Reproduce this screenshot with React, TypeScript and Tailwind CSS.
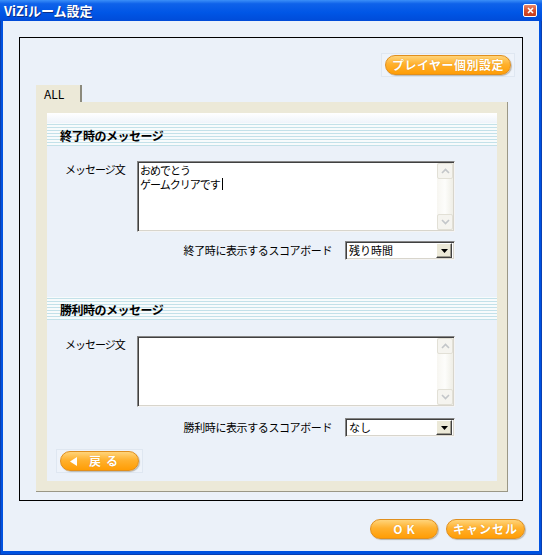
const font = "font-['Noto_Sans_CJK_JP','MS_UI_Gothic',sans-serif]";

const OrangeButton = ({
  children,
  className = "",
}: {
  children: React.ReactNode;
  className?: string;
}) => (
  <div
    className={`flex h-[20px] items-center justify-center rounded-full border border-[#e08f1e] bg-[linear-gradient(to_bottom,#ffd47a_0%,#ffb12e_45%,#ff9d05_100%)] text-[12px] leading-none font-bold text-white shadow-[1px_1px_1px_rgba(120,110,90,0.45)] [text-shadow:0_0_1px_#d98000] ${className}`}
  >
    {children}
  </div>
);

const ButtonBox = ({ children }: { children: React.ReactNode }) => (
  <div className="border border-[#dfe7f1] bg-[#eef3fa] px-[3px] py-[1px]">{children}</div>
);

const Chevron = ({ up }: { up?: boolean }) => (
  <svg width="9" height="6" viewBox="0 0 9 6">
    <polyline
      points={up ? "1,5 4.5,1.5 8,5" : "1,1 4.5,4.5 8,1"}
      fill="none"
      stroke="#c3c6c9"
      strokeWidth="1.6"
    />
  </svg>
);

const ScrollBar = () => (
  <div className="flex w-[16px] flex-col bg-[linear-gradient(to_right,#f7f6f1,#fdfdfb_50%,#efeee6)]">
    <div className="flex h-[16px] items-center justify-center rounded-[2px] border border-[#e2e0d6] bg-[#f5f4ef]">
      <Chevron up />
    </div>
    <div className="flex-1" />
    <div className="flex h-[16px] items-center justify-center rounded-[2px] border border-[#e2e0d6] bg-[#f5f4ef]">
      <Chevron />
    </div>
  </div>
);

const TextBox = ({ lines }: { lines: string[] }) => (
  <div className="flex h-[71px] w-[318px] border border-t-[#868686] border-l-[#868686] border-r-[#f4f4f4] border-b-[#f4f4f4] bg-white shadow-[inset_1px_1px_0_#404040,inset_-1px_-1px_0_#d8d5cc] p-[1px]">
    <div className="flex-1 pl-[1px] pt-[1px] text-[11px] leading-[13px] tracking-[-1px] text-black">
      {lines.map((line, i) => (
        <div key={i}>
          {line}
          {i === lines.length - 1 && <span className="ml-[2px] inline-block h-[12px] w-px translate-y-[1px] bg-black" />}
        </div>
      ))}
    </div>
    <ScrollBar />
  </div>
);

const Select = ({ value }: { value: string }) => (
  <div className="flex h-[19px] w-[110px] items-center border border-t-[#868686] border-l-[#868686] border-r-[#f4f4f4] border-b-[#f4f4f4] bg-white shadow-[inset_1px_1px_0_#404040,inset_-1px_-1px_0_#d8d5cc] p-[2px]">
    <span className="flex-1 pl-[1px] text-[11px] leading-none text-black">{value}</span>
    <div className="flex h-[15px] w-[16px] items-center justify-center border border-t-[#fff] border-l-[#fff] border-r-[#404040] border-b-[#404040] bg-[#ece9d8] shadow-[inset_-1px_-1px_0_#a09d90]">
      <svg width="7" height="4" viewBox="0 0 7 4">
        <polygon points="0,0 7,0 3.5,4" fill="#000" />
      </svg>
    </div>
  </div>
);

const SectionHeader = ({ title }: { title: string }) => (
  <div className="flex h-[23px] items-center bg-[repeating-linear-gradient(to_bottom,#f7fbfc_0px,#f7fbfc_1px,#c3e1e9_1px,#c3e1e9_2px,#f7fbfc_2px,#f7fbfc_3px)] pl-[13px] pt-[2px]">
    <span className="text-[12px] leading-none font-bold tracking-[-0.5px] text-black">{title}</span>
  </div>
);

const MessageSection = ({
  title,
  lines,
  boardLabel,
  boardValue,
  first,
}: {
  title: string;
  lines: string[];
  boardLabel: string;
  boardValue: string;
  first?: boolean;
}) => (
  <div className={first ? "" : "mt-[37px]"}>
    <SectionHeader title={title} />
    <div className={`${first ? "mt-[15px]" : "mt-[16px]"} flex pl-[18px]`}>
      <span className="w-[72px] pt-[3px] text-[11px] leading-none tracking-[-1px] text-black">メッセージ文</span>
      <TextBox lines={lines} />
    </div>
    <div className={`${first ? "mt-[9px]" : "mt-[11px]"} flex items-center justify-end gap-[13px] pr-[42px]`}>
      <span className="text-[11px] leading-none tracking-[-0.4px] text-black">{boardLabel}</span>
      <Select value={boardValue} />
    </div>
  </div>
);

export default function App() {
  return (
    <div
      className={`${font} flex h-[555px] w-[542px] flex-col bg-[#0052e0] px-[3px] pb-[4px] shadow-[inset_1px_0_0_#0a3fb0,inset_-1px_0_0_#0a3fb0,inset_0_-1px_0_#0a3fb0]`}
    >
      {/* title bar */}
      <div className="-mx-[3px] flex h-[21px] items-center justify-between bg-[linear-gradient(to_bottom,#3b8ff8_0%,#0f62ea_18%,#0056e6_60%,#004bd8_100%)] pl-[4px] pr-[5px]">
        <span className="text-[13px] leading-none font-bold text-white [text-shadow:1px_1px_0_#0a2f8a]">
          ViZiルーム設定
        </span>
        <div className="flex h-[13px] w-[14px] items-center justify-center rounded-[2px] border border-white bg-[linear-gradient(to_bottom,#e8866a,#d8502e_50%,#c63a18)]">
          <svg width="7" height="7" viewBox="0 0 7 7">
            <path d="M1 1L6 6M6 1L1 6" stroke="#fff" strokeWidth="1.6" />
          </svg>
        </div>
      </div>

      {/* body */}
      <div className="flex flex-1 flex-col bg-[#ebf1f9]">
        <div className="mx-[16px] mt-[16px] flex h-[464px] flex-col border border-black">
          <div className="flex justify-end pr-[7px] pt-[15px]">
            <ButtonBox>
              <OrangeButton className="w-[126px] tracking-[0.5px]">プレイヤー個別設定</OrangeButton>
            </ButtonBox>
          </div>

          <div className="ml-[16px] mt-[8px] flex h-[17px] w-[46px] items-center border-r-2 border-r-[#8c8a7c] bg-[#ece9d8] pl-[8px] text-[12px] leading-none text-black">
            ALL
          </div>

          <div className="ml-[16px] w-[472px] border-r border-b border-[#9a9786] bg-[#ece9d8] pb-[10px] pl-[11px] pr-[10px] pt-[11px]">
            <div className="flex h-[368px] flex-col bg-[linear-gradient(to_bottom,#ffffff_0px,#ebf1f9_12px)] pt-[10px]">
              <MessageSection
                first
                title="終了時のメッセージ"
                lines={["おめでとう", "ゲームクリアです"]}
                boardLabel="終了時に表示するスコアボード"
                boardValue="残り時間"
              />
              <MessageSection
                title="勝利時のメッセージ"
                lines={[]}
                boardLabel="勝利時に表示するスコアボード"
                boardValue="なし"
              />
              <div className="ml-[9px] mt-[12px] flex">
                <ButtonBox>
                  <OrangeButton className="w-[79px] justify-start gap-[12px] pl-[9px]">
                    <svg width="7" height="9" viewBox="0 0 7 9">
                      <polygon points="7,0 7,9 0,4.5" fill="#fff" />
                    </svg>
                    <span className="tracking-[5px]">戻る</span>
                  </OrangeButton>
                </ButtonBox>
              </div>
            </div>
          </div>
        </div>

        <div className="mt-[18px] flex justify-end gap-[8px] pr-[14px]">
          <OrangeButton className="w-[68px] pl-[4px] tracking-[4px]">OK</OrangeButton>
          <OrangeButton className="w-[79px] tracking-[1px]">キャンセル</OrangeButton>
        </div>
      </div>
    </div>
  );
}
